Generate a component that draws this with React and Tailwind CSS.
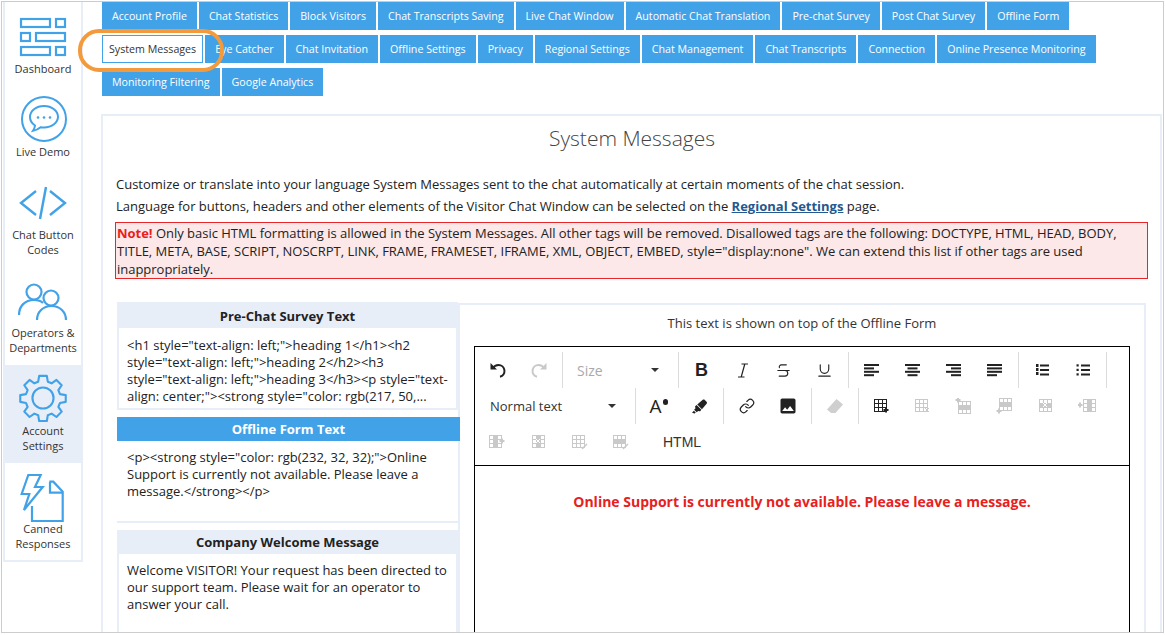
import { Strikethrough, Underline, Link as LinkIcon } from "lucide-react";
import { MdImage } from "react-icons/md";
import { FaHighlighter } from "react-icons/fa";

const tabRows = [
  { size: "text-[10.63px] pb-0", inner: "pt-px", tabs: ["Account Profile", "Chat Statistics", "Block Visitors", "Chat Transcripts Saving", "Live Chat Window", "Automatic Chat Translation", "Pre-chat Survey", "Post Chat Survey", "Offline Form"] },
  { size: "text-[10.67px]", inner: "pb-px", tabs: ["System Messages", "Eye Catcher", "Chat Invitation", "Offline Settings", "Privacy", "Regional Settings", "Chat Management", "Chat Transcripts", "Connection", "Online Presence Monitoring"] },
  { size: "text-[10.67px]", inner: "pb-px", tabs: ["Monitoring Filtering", "Google Analytics"] },
];

const DashboardIcon = () => (
  <svg width="48" height="42" viewBox="0 0 48 42" fill="none" stroke="#42a2e8" strokeWidth="2.2">
    <rect x="2" y="2" width="29" height="8" />
    <rect x="37" y="2" width="9" height="8" />
    <rect x="2" y="16" width="9" height="8" />
    <rect x="17" y="16" width="29" height="8" />
    <rect x="2" y="30" width="29" height="8" />
    <rect x="37" y="30" width="9" height="8" />
  </svg>
);

const DemoIcon = () => (
  <svg className="ml-[1px]" width="48" height="48" viewBox="0 0 48 48" fill="none" stroke="#42a2e8" strokeWidth="2">
    <circle cx="24" cy="24" r="22" />
    <path d="M24 11c-8 0-14 4.800-14 11 0 3.500 2 6.600 5 8.500-.2 2-1 3.800-2 5.300 3-.6 5.600-1.900 7.600-3.600 1.100.2 2.200.3 3.400.3 8 0 14-5 14-10.700S32 11 24 11z" />
    <circle cx="18" cy="22.500" r="1.300" fill="#42a2e8" stroke="none" />
    <circle cx="24" cy="22.500" r="1.300" fill="#42a2e8" stroke="none" />
    <circle cx="30" cy="22.500" r="1.300" fill="#42a2e8" stroke="none" />
  </svg>
);

const CodeIcon = () => (
  <svg width="50" height="34" viewBox="0 0 50 34" fill="none" stroke="#42a2e8" strokeWidth="2.4">
    <path d="M18 5L3 17l15 12" />
    <path d="M32 5l15 12-15 12" />
    <path d="M28 1l-6 32" />
  </svg>
);

const PeopleIcon = () => (
  <svg width="50" height="38" viewBox="0 0 50 38" fill="none" stroke="#42a2e8" strokeWidth="2.2">
    <circle cx="16" cy="9" r="7.500" />
    <path d="M1 32c0-9 6-15 15-15 4 0 7 1 9 3" />
    <circle cx="33" cy="15" r="7.500" />
    <path d="M19 37c0-8 6-14 14.500-14S48 29 48 37" />
  </svg>
);

const GearIcon = () => (
  <svg width="48" height="50" viewBox="0 0 50 50" fill="none" stroke="#42a2e8" strokeWidth="2.200" strokeLinejoin="round">
    <circle cx="25" cy="25" r="11" />
    <path d="M21 2h8l1 6 4 1.700 5-3.500 5.500 5.500-3.500 5 1.700 4.300 6 1v7l-6 1.200-1.700 4 3.500 5-5.500 5.600-5-3.500-4 1.700-1 6h-8l-1-6-4-1.700-5 3.500-5.500-5.600 3.500-5-1.700-4-6-1.200v-7l6-1 1.700-4.300-3.500-5L11 6.200l5 3.500L20 8z" />
  </svg>
);

const CannedIcon = () => (
  <svg width="46" height="48" viewBox="0 0 46 48" fill="none" stroke="#42a2e8" strokeWidth="2.200">
    <path d="M8.300 1h12.400L15 13h7.700L4 36l5.300-16H1.700z" />
    <path d="M29.300 7.700h4l9.400 10v29.300H12V32" />
    <path d="M30 8v10.700h12.700" />
  </svg>
);

const navItems = [
  { label: ["Dashboard"], Icon: DashboardIcon, h: "h-[80px]", pt: "pt-[14px]", gap: "mt-[2px]" },
  { label: ["Live Demo"], Icon: DemoIcon, h: "h-[83px]", pt: "pt-[12px]", gap: "mt-[1px]" },
  { label: ["Chat Button", "Codes"], Icon: CodeIcon, h: "h-[98px]", pt: "pt-[20px]", gap: "mt-[7px]" },
  { label: ["Operators &", "Departments"], Icon: PeopleIcon, h: "h-[101px]", pt: "pt-[19px]", gap: "mt-[4px]" },
  { label: ["Account", "Settings"], Icon: GearIcon, h: "h-[98px]", pt: "pt-[8px]", gap: "mt-[0px]", active: true },
  { label: ["Canned", "Responses"], Icon: CannedIcon, h: "h-[97px]", pt: "pt-[11px]", gap: "-mt-[1px]" },
];

const UndoIcon = ({ color, flip }) => (
  <svg width="18" height="17" viewBox="0 0 18 17" fill="none" className={flip ? "-scale-x-100" : ""}>
    <path d="M1.500 1v6.500H8z" fill={color} />
    <path d="M3.500 6.500C5 4.200 7 3 9.500 3a6 6 0 0 1 1.500 11.800" stroke={color} strokeWidth="2" />
  </svg>
);

const ItalicIcon = () => (
  <svg width="12" height="15" viewBox="0 0 12 15" fill="none" stroke="#222" strokeWidth="1.200">
    <path d="M4.500 1h6.500M1 14h6.500M7.800 1L4.200 14" />
  </svg>
);

// four thick bars, x and width per bar
const BarsIcon = ({ bars }) => (
  <svg width="15" height="13" viewBox="0 0 15 13" fill="#222">
    {bars.map(([x, w], i) => <rect key={i} x={x} y={i * 3.4} width={w} height="2" />)}
  </svg>
);

const ListIcon = ({ numbered }) => (
  <svg width="14" height="12" viewBox="0 0 14 12" fill="#222">
    {[0, 1, 2].map((i) => (
      <g key={i}>
        <rect x="5" y={i * 4.500 + 0.500} width="9" height="2" />
        {numbered ? <rect x="1" y={i * 4 + 0} width="2.500" height="3" /> : <rect x="0.500" y={i * 4.500 + 0.300} width="2.200" height="2.200" />}
      </g>
    ))}
  </svg>
);

// table buttons of the editor: a small grid plus a mark at a given corner
const TableIcon = ({ color = "#c9c9c9", band, mark, at = "br", gridX = 1, gridY = 1 }) => {
  const g = 12;
  const marks = { br: [13, 12], tl: [3, 2], bl: [3, 13], l: [2, 7], r: [13, 7], c: [gridX + 6, gridY + 6] };
  const [mx, my] = marks[at];
  return (
    <svg width="18" height="16" viewBox="0 0 18 16" fill="none" stroke={color} strokeWidth="1">
      <rect x={gridX + 0.500} y={gridY + 0.500} width={g} height={g} />
      <path d={`M${gridX + 0.500} ${gridY + 4.500}h${g}M${gridX + 0.500} ${gridY + 8.500}h${g}M${gridX + 4.500} ${gridY + 0.500}v${g}M${gridX + 8.500} ${gridY + 0.500}v${g}`} />
      {band === "h" && <rect x={gridX} y={gridY + 4} width={g + 1} height="5" fill={color} stroke="none" />}
      {band === "v" && <rect x={gridX + 4} y={gridY} width="5" height={g + 1} fill={color} stroke="none" />}
      {mark === "plus" && <path d={`M${mx} ${my - 2.500}v5M${mx - 2.500} ${my}h5`} strokeWidth="2" fill="none" />}
      {mark === "x" && <path d={`M${mx - 2} ${my - 2}l4 4M${mx + 2} ${my - 2}l-4 4`} stroke={at === "c" ? "#fff" : color} />}
      {mark === "pen" && <path d="M11 15l5-5" strokeWidth="1.500" />}
    </svg>
  );
};

const EraserIcon = () => (
  <svg width="18" height="16" viewBox="0 0 18 16" fill="#cfcfcf">
    <path d="M10.500 1l6.500 5.500-7.500 8.500H5L1 11.500z" />
  </svg>
);

const ToolBtn = ({ children }) => (
  <div className="w-[41px] h-[36px] flex items-center justify-center shrink-0">{children}</div>
);

const Sep = () => <div className="ml-[3px] mr-[2px] w-px h-[36px] bg-[#dcdcdc] shrink-0" />;

const Dropdown = ({ text, width, pl, color }) => (
  <div className={`${width} ${pl} pr-[16px] h-[36px] flex items-center justify-between shrink-0 ${color}`}>
    <span className="pt-px">{text}</span>
    <span className="w-0 h-0 border-x-[4px] border-x-transparent border-t-[4px] border-t-[#333]" />
  </div>
);

const Toolbar = () => (
  <div className="h-[119px] border-b border-black pt-[5px] pl-[2px]">
    <div className="flex items-center h-[36px]">
      <ToolBtn><UndoIcon color="#222" /></ToolBtn>
      <ToolBtn><UndoIcon color="#c9c9c9" flip /></ToolBtn>
      <Sep />
      <Dropdown text="Size" width="w-[110px]" pl="pl-[12px]" color="text-[14px] text-[#a9a9a9]" />
      <Sep />
      <ToolBtn><span className="text-[18px] leading-none font-bold text-[#222] font-['Liberation_Sans',sans-serif]">B</span></ToolBtn>
      <ToolBtn><ItalicIcon /></ToolBtn>
      <ToolBtn><Strikethrough size={17} color="#222" strokeWidth={1.6} /></ToolBtn>
      <ToolBtn><Underline size={17} color="#222" strokeWidth={1.6} /></ToolBtn>
      <Sep />
      <ToolBtn><BarsIcon bars={[[0, 15], [0, 10], [0, 15], [0, 10]]} /></ToolBtn>
      <ToolBtn><BarsIcon bars={[[0, 15], [2.500, 10], [0, 15], [2.500, 10]]} /></ToolBtn>
      <ToolBtn><BarsIcon bars={[[0, 15], [5, 10], [0, 15], [5, 10]]} /></ToolBtn>
      <ToolBtn><BarsIcon bars={[[0, 15], [0, 15], [0, 15], [0, 10]]} /></ToolBtn>
      <Sep />
      <ToolBtn><ListIcon numbered /></ToolBtn>
      <ToolBtn><ListIcon /></ToolBtn>
      <Sep />
    </div>
    <div className="flex items-center h-[36px]">
      <Dropdown text="Normal text" width="w-[155px]" pl="pl-[13px]" color="text-[13px] text-[#333]" />
      <Sep />
      <ToolBtn>
        <span className="relative text-[19px] leading-none text-[#222] pr-[6px]">
          A<span className="absolute right-0 top-[2px] w-[5px] h-[6px] rounded-full bg-[#222]" />
        </span>
      </ToolBtn>
      <ToolBtn><FaHighlighter size={15} color="#222" /></ToolBtn>
      <Sep />
      <ToolBtn><LinkIcon size={16} color="#222" strokeWidth={1.8} /></ToolBtn>
      <ToolBtn><MdImage size={20} color="#222" /></ToolBtn>
      <Sep />
      <ToolBtn><EraserIcon /></ToolBtn>
      <Sep />
      <ToolBtn><TableIcon color="#222" mark="plus" /></ToolBtn>
      <ToolBtn><TableIcon mark="x" /></ToolBtn>
      <ToolBtn><TableIcon band="h" mark="plus" at="tl" gridX={3} gridY={3} /></ToolBtn>
      <ToolBtn><TableIcon band="h" mark="plus" at="bl" gridX={3} gridY={0} /></ToolBtn>
      <ToolBtn><TableIcon band="h" mark="x" at="c" gridX={2} /></ToolBtn>
      <ToolBtn><TableIcon band="v" mark="plus" at="l" gridX={5} /></ToolBtn>
    </div>
    <div className="flex items-center h-[36px]">
      <ToolBtn><TableIcon band="v" mark="plus" at="r" gridX={0} /></ToolBtn>
      <ToolBtn><TableIcon band="v" mark="x" at="c" gridX={2} /></ToolBtn>
      <ToolBtn><TableIcon mark="pen" /></ToolBtn>
      <ToolBtn><TableIcon band="h" mark="pen" /></ToolBtn>
      <div className="pl-[22px] text-[14px] text-[#333] font-['Liberation_Sans',sans-serif]">HTML</div>
    </div>
  </div>
);

const MessageItem = ({ title, children, active, headH, bodyH, bodyPt, last }) => (
  <div className={active ? "relative z-10 -mr-[2px]" : ""}>
    <div className={`${headH} flex items-center justify-center text-[13px] font-bold ${active ? "bg-[#42a2e8] text-white" : "bg-[#e8eef8] text-[#222]"}`}>
      {title}
    </div>
    <div className={`${bodyH} ${bodyPt} ${active ? "pl-[10px] pr-[8px]" : "pl-[8px] pr-[6px]"} text-[13px] leading-[17px] text-[#222] ${active ? "" : `border-x-2 border-[#e8eef8] ${last ? "" : "border-b-2"}`}`}>
      {children}
    </div>
  </div>
);

export default function App() {
  return (
    <div className="relative h-[635px] w-[1165px] overflow-hidden bg-white font-['Open_Sans',sans-serif]">
      <div className="m-[1px] mb-0 h-[632px] w-[1163px] border border-[#cccccc] flex overflow-hidden">
        {/* Sidebar */}
        <aside className="ml-[1px] w-[80px] h-[560px] border-x-2 border-b-2 border-[#e8eef8] shrink-0 pt-[1px]">
          {navItems.map(({ label, Icon, h, pt, gap, active }) => (
            <div key={label[0]} className={`${h} ${pt} flex flex-col items-center ${active ? "bg-[#e8eef8]" : ""}`}>
              <Icon />
              <div className={`${gap} text-[11px] leading-[15px] text-center text-[#333]`}>
                {label.map((l) => <div key={l}>{l}</div>)}
              </div>
            </div>
          ))}
        </aside>

        <div className="ml-[18px] flex-1 min-w-0">
          {/* Settings tabs */}
          <div className="h-[112px]">
            {tabRows.map(({ size, inner, tabs }) => (
              <div key={tabs[0]} className={`flex gap-[2px] h-[33px] items-start pl-[1px] ${size}`}>
                {tabs.map((t) =>
                  t === "System Messages" ? (
                    <div key={t} className={`h-[28px] ${inner} px-[6px] flex items-center text-[#333] bg-white border border-[#42a2e8]`}>{t}</div>
                  ) : (
                    <div key={t} className={`h-[28px] ${inner} px-[10px] flex items-center text-white bg-[#42a2e8]`}>{t}</div>
                  )
                )}
              </div>
            ))}
          </div>

          {/* Main panel */}
          <main className="border-2 border-[#e8eef8] h-[520px] pl-[13px] pr-[12px] text-[#222] mr-[1px]">
            <h1 className="h-[48px] pt-[8px] text-center text-[21px] leading-[28px] font-light text-[#444]">System Messages</h1>
            <p className="mt-[9px] text-[13px] leading-[22px]">
              Customize or translate into your language System Messages sent to the chat automatically at certain moments of the chat session.
            </p>
            <p className="text-[13px] leading-[22px]">
              Language for buttons, headers and other elements of the Visitor Chat Window can be selected on the{" "}
              <a className="font-bold underline text-[#24588e]">Regional Settings</a> page.
            </p>
            <div className="mt-[5px] -ml-px h-[57px] border border-[#e8262a] bg-[#fce8e8] px-[1px] pt-px text-[13px] leading-[18px] tracking-[-0.02px]">
              <b className="text-[#e82020]">Note!</b> Only basic HTML formatting is allowed in the System Messages. All other tags will be removed. Disallowed tags are the following: DOCTYPE, HTML, HEAD, BODY, TITLE, META, BASE, SCRIPT, NOSCRPT, LINK, FRAME, FRAMESET, IFRAME, XML, OBJECT, EMBED, style="display:none". We can extend this list if other tags are used inappropriately.
            </div>

            <div className="mt-[23px] flex">
              <div className="w-[341px] shrink-0 ml-[1px]">
                <MessageItem title="Pre-Chat Survey Text" headH="h-[26px] pt-[3px]" bodyH="h-[82px]" bodyPt="pt-[9px]">
                  {'<h1 style="text-align: left;">heading 1</h1><h2 style="text-align: left;">heading 2</h2><h3 style="text-align: left;">heading 3</h3><p style="text-align: center;"><strong style="color: rgb(217, 50,...'}
                </MessageItem>
                <div className="h-[7px]" />
                <MessageItem title="Offline Form Text" active headH="h-[24px] pt-px" bodyH="h-[80px]" bodyPt="pt-[8px]">
                  {'<p><strong style="color: rgb(232, 32, 32);">Online Support is currently not available. Please leave a message.</strong></p>'}
                </MessageItem>
                <div className="h-[2px] bg-[#e8eef8]" />
                <div className="h-[7px]" />
                <MessageItem title="Company Welcome Message" headH="h-[24px] pt-px" bodyH="h-[100px]" bodyPt="pt-[8px]" last>
                  Welcome VISITOR! Your request has been directed to our support team. Please wait for an operator to answer your call.
                </MessageItem>
              </div>
              <div className="w-[688px] h-[340px] mt-[1px] border-2 border-[#e8eef8] pl-[14px] pr-[14px]">
                <div className="h-[41px] pt-[9px] text-center text-[13px] leading-[18px] text-[#333]">This text is shown on top of the Offline Form</div>
                <div className="h-[300px] border border-black">
                  <Toolbar />
                  <div className="pt-[26px] text-center text-[14px] leading-[20px] font-bold text-[#e82020]">
                    Online Support is currently not available. Please leave a message.
                  </div>
                </div>
              </div>
            </div>
          </main>
        </div>
      </div>

      {/* Orange highlight around the System Messages tab */}
      <div className="absolute left-[78px] top-[29px] w-[146px] h-[43px] rounded-[21px] border-[4px] border-[#f39a3c]" />
    </div>
  );
}
